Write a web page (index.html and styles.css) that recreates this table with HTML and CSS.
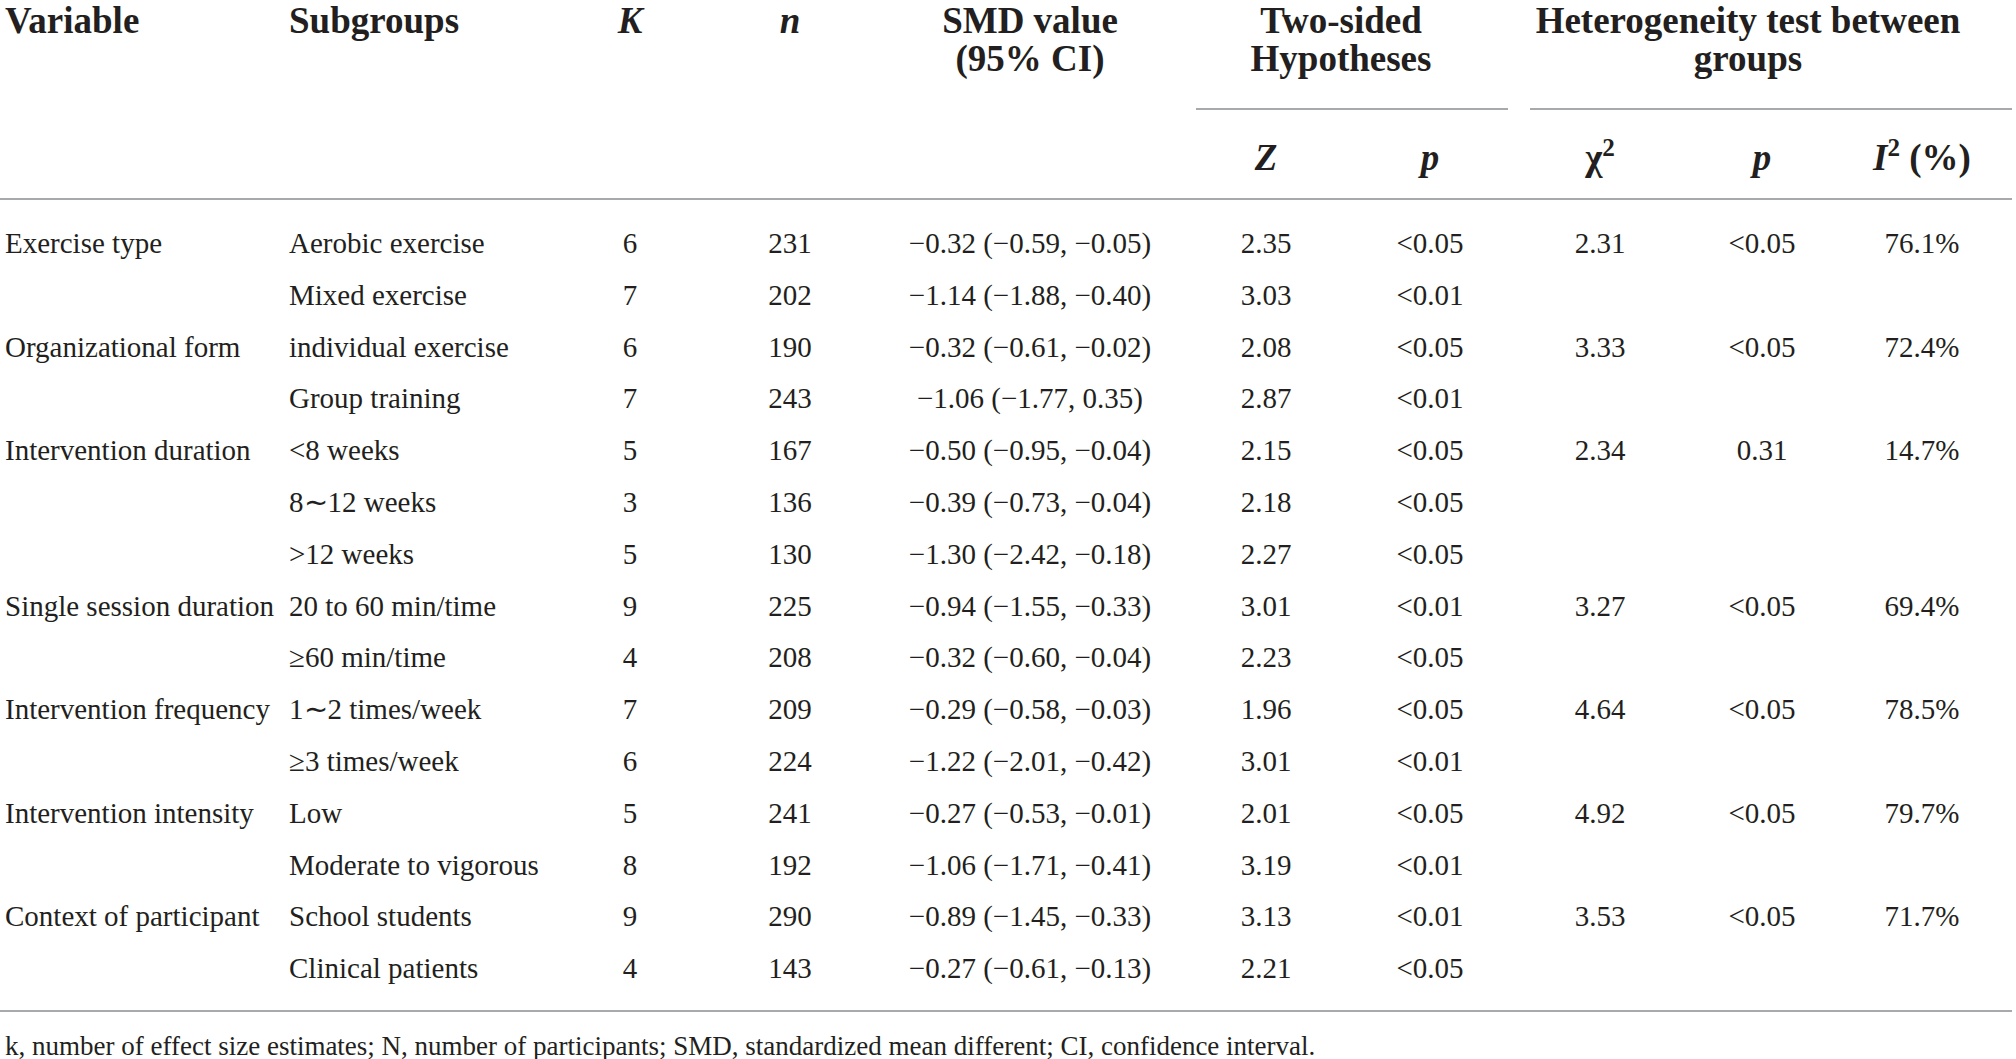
FILE: index.html
```html
<!DOCTYPE html>
<html lang="en">
<head>
<meta charset="utf-8">
<title>Subgroup analysis</title>
<link rel="stylesheet" href="styles.css">
</head>
<body>
<div class="page">
<table class="tbl">
  <colgroup>
    <col class="c-var"><col class="c-sub"><col class="c-k"><col class="c-n"><col class="c-smd">
    <col class="c-z"><col class="c-p1"><col class="c-chi"><col class="c-p2"><col class="c-i2">
  </colgroup>
  <thead>
    <tr class="h1">
      <th rowspan="2" class="left first">Variable</th>
      <th rowspan="2" class="left sub">Subgroups</th>
      <th rowspan="2"><i>K</i></th>
      <th rowspan="2"><i>n</i></th>
      <th rowspan="2">SMD value<br>(95% CI)</th>
      <th colspan="2" class="grp"><div class="grp-in two">Two-sided<br>Hypotheses</div></th>
      <th colspan="3" class="grp"><div class="grp-in het">Heterogeneity test between<br>groups</div></th>
    </tr>
    <tr class="h2">
      <th><i>Z</i></th>
      <th><i>p</i></th>
      <th>χ<sup>2</sup></th>
      <th><i>p</i></th>
      <th><i>I</i><sup>2</sup> (%)</th>
    </tr>
  </thead>
  <tbody>
    <tr><td class="left first">Exercise type</td><td class="left sub">Aerobic exercise</td><td>6</td><td>231</td><td>−0.32 (−0.59, −0.05)</td><td>2.35</td><td>&lt;0.05</td><td>2.31</td><td>&lt;0.05</td><td>76.1%</td></tr>
    <tr><td class="left first"></td><td class="left sub">Mixed exercise</td><td>7</td><td>202</td><td>−1.14 (−1.88, −0.40)</td><td>3.03</td><td>&lt;0.01</td><td></td><td></td><td></td></tr>
    <tr><td class="left first">Organizational form</td><td class="left sub">individual exercise</td><td>6</td><td>190</td><td>−0.32 (−0.61, −0.02)</td><td>2.08</td><td>&lt;0.05</td><td>3.33</td><td>&lt;0.05</td><td>72.4%</td></tr>
    <tr><td class="left first"></td><td class="left sub">Group training</td><td>7</td><td>243</td><td>−1.06 (−1.77, 0.35)</td><td>2.87</td><td>&lt;0.01</td><td></td><td></td><td></td></tr>
    <tr><td class="left first">Intervention duration</td><td class="left sub">&lt;8 weeks</td><td>5</td><td>167</td><td>−0.50 (−0.95, −0.04)</td><td>2.15</td><td>&lt;0.05</td><td>2.34</td><td>0.31</td><td>14.7%</td></tr>
    <tr><td class="left first"></td><td class="left sub">8∼12 weeks</td><td>3</td><td>136</td><td>−0.39 (−0.73, −0.04)</td><td>2.18</td><td>&lt;0.05</td><td></td><td></td><td></td></tr>
    <tr><td class="left first"></td><td class="left sub">&gt;12 weeks</td><td>5</td><td>130</td><td>−1.30 (−2.42, −0.18)</td><td>2.27</td><td>&lt;0.05</td><td></td><td></td><td></td></tr>
    <tr><td class="left first">Single session duration</td><td class="left sub">20 to 60 min/time</td><td>9</td><td>225</td><td>−0.94 (−1.55, −0.33)</td><td>3.01</td><td>&lt;0.01</td><td>3.27</td><td>&lt;0.05</td><td>69.4%</td></tr>
    <tr><td class="left first"></td><td class="left sub">≥60 min/time</td><td>4</td><td>208</td><td>−0.32 (−0.60, −0.04)</td><td>2.23</td><td>&lt;0.05</td><td></td><td></td><td></td></tr>
    <tr><td class="left first">Intervention frequency</td><td class="left sub">1∼2 times/week</td><td>7</td><td>209</td><td>−0.29 (−0.58, −0.03)</td><td>1.96</td><td>&lt;0.05</td><td>4.64</td><td>&lt;0.05</td><td>78.5%</td></tr>
    <tr><td class="left first"></td><td class="left sub">≥3 times/week</td><td>6</td><td>224</td><td>−1.22 (−2.01, −0.42)</td><td>3.01</td><td>&lt;0.01</td><td></td><td></td><td></td></tr>
    <tr><td class="left first">Intervention intensity</td><td class="left sub">Low</td><td>5</td><td>241</td><td>−0.27 (−0.53, −0.01)</td><td>2.01</td><td>&lt;0.05</td><td>4.92</td><td>&lt;0.05</td><td>79.7%</td></tr>
    <tr><td class="left first"></td><td class="left sub">Moderate to vigorous</td><td>8</td><td>192</td><td>−1.06 (−1.71, −0.41)</td><td>3.19</td><td>&lt;0.01</td><td></td><td></td><td></td></tr>
    <tr><td class="left first">Context of participant</td><td class="left sub">School students</td><td>9</td><td>290</td><td>−0.89 (−1.45, −0.33)</td><td>3.13</td><td>&lt;0.01</td><td>3.53</td><td>&lt;0.05</td><td>71.7%</td></tr>
    <tr><td class="left first"></td><td class="left sub">Clinical patients</td><td>4</td><td>143</td><td>−0.27 (−0.61, −0.13)</td><td>2.21</td><td>&lt;0.05</td><td></td><td></td><td></td></tr>
  </tbody>
</table>
<p class="note">k, number of effect size estimates; N, number of participants; SMD, standardized mean different; CI, confidence interval.</p>
</div>
</body>
</html>
```

FILE: styles.css
```css
html, body {
  margin: 0;
  padding: 0;
  background: #ffffff;
}

.page {
  width: 2016px;
  color: #231f20;
  font-family: "Liberation Serif", "Times New Roman", serif;
}

.tbl {
  width: 2012px;
  table-layout: fixed;
  border-collapse: separate;
  border-spacing: 0;
}

.c-var { width: 284px; }
.c-sub { width: 276px; }
.c-k { width: 140px; }
.c-n { width: 180px; }
.c-smd { width: 300px; }
.c-z { width: 172px; }
.c-p1 { width: 156px; }
.c-chi { width: 184px; }
.c-p2 { width: 140px; }
.c-i2 { width: 180px; }

.tbl th {
  font-size: 37px;
  font-weight: bold;
  line-height: 38px;
  text-align: center;
  vertical-align: top;
  padding: 0;
  white-space: nowrap;
}

.tbl th i {
  font-style: italic;
}

.tbl .left {
  text-align: left;
}

.tbl .first {
  padding-left: 5px;
}

.tbl .sub {
  padding-left: 5px;
}

.h1 th {
  padding-top: 2px;
}

.grp-in {
  border-bottom: 2px solid #a7a9ac;
  padding-bottom: 30px;
}

.grp-in.two {
  margin-left: 16px;
  padding-right: 22px;
}

.grp-in.het {
  margin-left: 22px;
  padding-right: 46px;
}

.h2 th {
  padding-top: 29px;
  padding-bottom: 21px;
}

.tbl sup {
  font-size: 0.68em;
  line-height: 0;
  vertical-align: 0.55em;
}

.tbl td {
  font-size: 29px;
  line-height: 51.8px;
  text-align: center;
  vertical-align: top;
  padding: 0;
  white-space: nowrap;
}

.tbl tbody tr:first-child td {
  border-top: 2px solid #a7a9ac;
  padding-top: 18px;
}

.tbl tbody tr:last-child td {
  border-bottom: 2px solid #a7a9ac;
  padding-bottom: 15px;
}

.note {
  margin: 19px 0 0 0;
  padding-left: 5px;
  font-size: 27px;
  line-height: 30px;
  white-space: nowrap;
}
```
